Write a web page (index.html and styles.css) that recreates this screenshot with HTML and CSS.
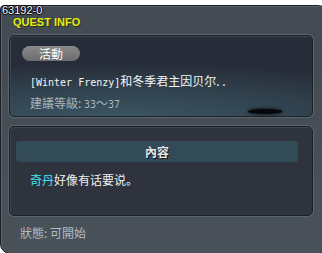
FILE: index.html
```html
<!DOCTYPE html>
<html lang="zh">
<head>
    <meta charset="UTF-8">
    <title>Quest Info</title>
    <link rel="stylesheet" href="styles.css">
</head>
<body>
    <div class="quest-id">63192-0</div>
    <div class="window">
        <div class="window-title">QUEST INFO</div>

        <div class="panel panel-top">
            <span class="badge">活動</span>
            <div class="quest-name"><span class="latin">[Winter Frenzy]</span>和冬季君主因贝尔. .</div>
            <div class="quest-level">建議等級: <span class="latin">33</span>～<span class="latin">37</span></div>
            <div class="shadow"></div>
        </div>

        <div class="panel panel-body">
            <div class="section-head">內容</div>
            <p class="talk"><span class="npc">奇丹</span>好像有话要说。</p>
        </div>

        <div class="status">狀態: 可開始</div>
    </div>
</body>
</html>
```

FILE: styles.css
```css
body {
    margin: 0;
    padding: 5px 0 0 0;
    background: #fff;
    font-family: "Noto Sans CJK SC", "DejaVu Sans", sans-serif;
    font-size: 12px;
    position: relative;
}
.quest-id {
    position: absolute;
    left: 2px;
    top: 6px;
    z-index: 2;
    font-family: "Liberation Sans", Arial, sans-serif;
    font-size: 11px;
    line-height: 9px;
    color: #fff;
    text-shadow: 1px 0 0 #000, -1px 0 0 #000, 0 1px 0 #000, 0 -1px 0 #000;
}
.window {
    width: 311px;
    height: 237px;
    padding: 10px 7px 0 8px;
    border: 1px solid #1d2127;
    border-radius: 4px 10px 10px 10px;
    background: linear-gradient(#434a52, #4a5259);
    box-shadow: inset 1px 1px 0 #5a626b;
    display: flex;
    flex-direction: column;
}
.window-title {
    font-family: "Liberation Sans Narrow", "Liberation Sans", Arial, sans-serif;
    font-weight: bold;
    font-size: 11px;
    line-height: 12px;
    height: 12px;
    color: #e2ee10;
    padding-left: 4px;
    margin-bottom: 7px;
    text-shadow: 1px 1px 0 #2a2e12;
}
.panel {
    position: relative;
    box-sizing: border-box;
    width: 304px;
    border: 1px solid #1c2027;
    border-radius: 5px;
    box-shadow: 0 0 0 1px #59646c, inset 1px 1px 0 #3c444e;
}
.panel-top {
    height: 82px;
    padding: 9px 12px 0 12px;
    background: radial-gradient(ellipse 140% 90% at 35% 110%, #3d5a66 0%, #2f3f4b 55%, #272d38 85%);
}
.badge {
    display: inline-block;
    width: 58px;
    height: 15px;
    line-height: 15px;
    border-radius: 8px;
    background: linear-gradient(#8a8a8a, #6c6c6c);
    color: #fff;
    text-align: center;
    font-size: 12px;
}
.quest-name {
    margin: 11px 0 0 8px;
    line-height: 16px;
    color: #f4f6f8;
}
.quest-level {
    margin: 4px 0 0 8px;
    line-height: 16px;
    color: #aab3bb;
}
.latin {
    font-family: "DejaVu Sans Mono", monospace;
    font-size: 10px;
}
.shadow {
    position: absolute;
    left: 238px;
    top: 73px;
    width: 34px;
    height: 5px;
    border-radius: 50%;
    background: #05080a;
    box-shadow: 0 0 3px 1px rgba(0, 0, 0, 0.6);
}
.panel-body {
    margin-top: 9px;
    height: 90px;
    padding: 14px 0 0 6px;
    background: #2e333d;
}
.section-head {
    width: 282px;
    height: 21px;
    line-height: 21px;
    border-radius: 3px;
    background: #334a57;
    color: #e2e8ec;
    text-align: center;
    font-weight: bold;
    font-size: 12px;
    text-shadow: 1px 1px 0 #111;
}
.talk {
    margin: 10px 0 0 14px;
    line-height: 16px;
    color: #eef1f4;
}
.npc {
    color: #3fe6f2;
}
.status {
    margin: 9px 0 0 11px;
    line-height: 16px;
    color: #b3bbc3;
}
```
